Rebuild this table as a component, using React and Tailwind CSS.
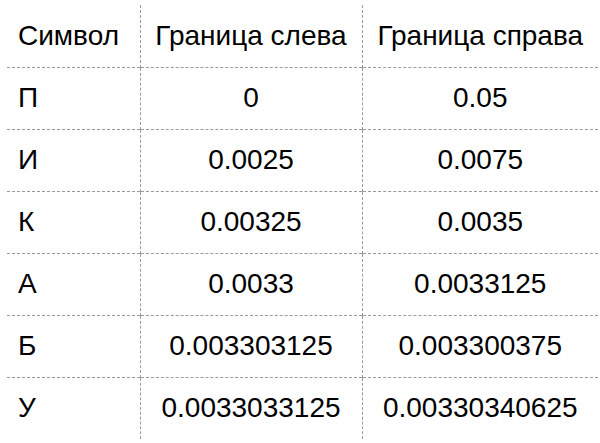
const rows = [
  ["П", "0", "0.05"],
  ["И", "0.0025", "0.0075"],
  ["К", "0.00325", "0.0035"],
  ["А", "0.0033", "0.0033125"],
  ["Б", "0.003303125", "0.003300375"],
  ["У", "0.0033033125", "0.00330340625"],
];

export default function App() {
  return (
    <div className="w-[600px] h-[443px] bg-white overflow-hidden pt-[5px] pl-[7px] text-black text-[28px] leading-none font-['Liberation_Sans',Arial,sans-serif]">
      <table className="border-collapse table-fixed w-[591px]">
        <colgroup>
          <col className="w-[133px]" />
          <col className="w-[222px]" />
          <col className="w-[236px]" />
        </colgroup>
        <thead>
          <tr className="h-[62px]">
            <th className="font-normal text-left pl-[11px] whitespace-nowrap">Символ</th>
            <th className="font-normal text-center whitespace-nowrap border-l border-dashed border-[#9a9a9a]">Граница слева</th>
            <th className="font-normal text-center whitespace-nowrap border-l border-dashed border-[#9a9a9a]">Граница справа</th>
          </tr>
        </thead>
        <tbody>
          {rows.map((r) => (
            <tr key={r[0]} className="h-[62px] border-t border-dashed border-[#9a9a9a]">
              <td className="text-left pl-[11px]">{r[0]}</td>
              <td className="text-center whitespace-nowrap border-l border-dashed border-[#9a9a9a]">{r[1]}</td>
              <td className="text-center whitespace-nowrap border-l border-dashed border-[#9a9a9a]">{r[2]}</td>
            </tr>
          ))}
        </tbody>
      </table>
    </div>
  );
}
